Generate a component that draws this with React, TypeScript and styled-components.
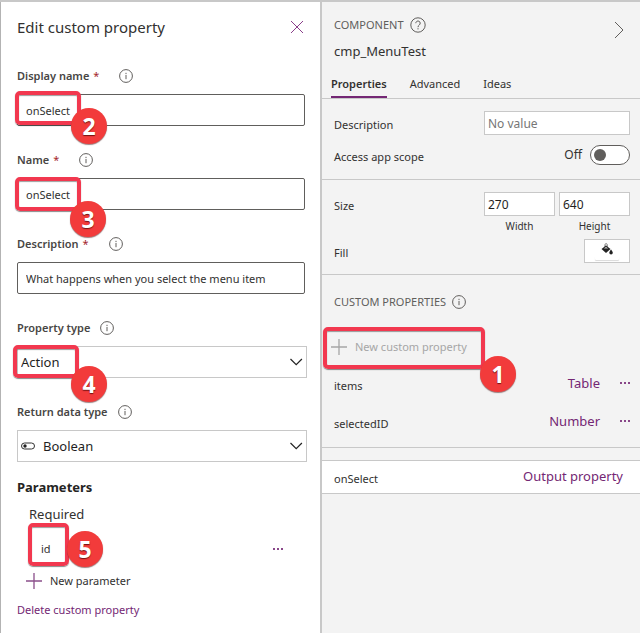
import React from "react";
import styled, { createGlobalStyle } from "styled-components";

const GlobalStyle = createGlobalStyle`
  * { box-sizing: border-box; }
  body { margin: 0; background: #f3f3f3; }
  body, button, input, select {
    font-family: "Noto Sans", "Open Sans", sans-serif;
    font-size: 11px;
    line-height: 16px;
    color: #323130;
  }
  svg { display: block; flex: none; }
`;

const PURPLE = "#742774";
const LINE = "#c8c8c8";

const Screen = styled.main`
  display: grid;
  grid-template-columns: 1fr 1fr;
  min-height: 100vh;
  border-top: 2px solid ${LINE};
`;

const EditPane = styled.section`
  display: flex;
  flex-direction: column;
  padding: 12px 13px 12px 16px;
  border-left: 1px solid #b3b3b3;
  background: #fff;
`;

const PaneHeader = styled.header`
  display: flex;
  align-items: center;
  justify-content: space-between;
  height: 26px;
  margin-bottom: 26px;
`;

const PaneTitle = styled.h1`
  margin: 0;
  font-size: 15px;
  line-height: 24px;
  font-weight: 400;
`;

const IconButton = styled.button`
  display: grid;
  place-items: center;
  flex: none;
  padding: 2px;
  border: 0;
  background: none;
  color: ${PURPLE};
  cursor: pointer;
`;

const CloseButton = styled(IconButton)`
  margin-right: 1px;
`;

const Fields = styled.div`
  display: grid;
  gap: 24px;
`;

const LabelRow = styled.div`
  display: flex;
  align-items: center;
  height: 20px;
  margin-bottom: 8px;
`;

const FieldLabel = styled.label<{ $required?: boolean }>`
  margin-right: ${(p) => (p.$required ? 20 : 10)}px;
  font-weight: 600;
  color: #484644;
`;

const Star = styled.span`
  margin-left: 4px;
  font-weight: 400;
  color: #a4262c;
`;

const Control = styled.div`
  position: relative;
`;

const TextControl = styled(Control)`
  margin-right: 2px;
`;

const TextBox = styled.input`
  display: block;
  width: 100%;
  height: 32px;
  padding: 0 8px;
  border: 1px solid #605e5c;
  border-radius: 2px;
  background: #fff;
`;

const SelectFrame = styled.div`
  display: flex;
  align-items: center;
  height: 32px;
  padding: 0 3px;
  border: 1px solid ${LINE};
`;

const SelectBox = styled.select<{ $icon?: boolean }>`
  flex: 1;
  min-width: 0;
  height: 24px;
  margin-left: ${(p) => (p.$icon ? 8 : 0)}px;
  padding: 0;
  border: 0;
  background: transparent;
  appearance: none;
  font-size: 13px;
  line-height: 20px;
  color: #1f1f1f;
`;

const Highlight = styled.span<{ $x: number; $y: number; $w: number; $h: number }>`
  position: absolute;
  left: ${(p) => p.$x}px;
  top: ${(p) => p.$y}px;
  width: ${(p) => p.$w}px;
  height: ${(p) => p.$h}px;
  border: 4px solid #f2384f;
  border-radius: 5px;
  box-shadow: 0 1px 1px rgba(60, 60, 60, 0.6), inset 0 1px 1px rgba(60, 60, 60, 0.5);
  pointer-events: none;
`;

const Badge = styled.span<{ $x: number; $y: number }>`
  position: absolute;
  left: ${(p) => p.$x}px;
  top: ${(p) => p.$y}px;
  z-index: 1;
  display: grid;
  place-items: center;
  width: 36px;
  height: 36px;
  border-radius: 50%;
  background: #f23b3b;
  box-shadow: 0 1px 1px rgba(90, 40, 40, 0.6);
  color: #fff;
  font-size: 23px;
  line-height: 36px;
  font-weight: 700;
  text-shadow: 0 1px 1px rgba(60, 0, 0, 0.7);
  pointer-events: none;
`;

const SectionTitle = styled.h2`
  margin: 15px 0 8px;
  font-size: 13px;
  line-height: 20px;
  font-weight: 700;
  color: #252423;
`;

const ParameterGroup = styled.div`
  padding: 0 12px;
`;

const GroupName = styled.h3`
  margin: 0;
  font-size: 13px;
  line-height: 18px;
  font-weight: 400;
`;

const ParameterRow = styled.div`
  position: relative;
  display: flex;
  align-items: center;
  justify-content: space-between;
  height: 48px;
  padding: 4px 10px 0 12px;
`;

const AddButton = styled.button<{ $muted?: boolean }>`
  display: flex;
  align-items: center;
  gap: 8px;
  padding: 0;
  border: 0;
  background: none;
  color: ${(p) => (p.$muted ? "#a6a6a6" : "#323130")};
  cursor: pointer;
`;

const NewParameter = styled(AddButton)`
  margin: 2px 9px 0;
`;

const DeleteLink = styled.a`
  align-self: flex-start;
  margin-top: 13px;
  color: ${PURPLE};
  text-decoration: none;
`;

const PropertyPane = styled.section`
  border-left: 2px solid ${LINE};
  background: #f3f3f3;
`;

const ComponentHeader = styled.header`
  display: flex;
  justify-content: space-between;
  padding: 14px 14px 0 12px;
`;

const Caption = styled.h2`
  display: flex;
  align-items: center;
  gap: 6px;
  height: 18px;
  margin: 0;
  font-size: 11px;
  font-weight: 400;
  color: #605e5c;
`;

const ComponentName = styled.div`
  margin-top: 7px;
  font-size: 13px;
  line-height: 20px;
`;

const Expand = styled(IconButton)`
  align-self: flex-start;
  margin-top: 3px;
  color: #605e5c;
`;

const Tabs = styled.nav`
  display: flex;
  gap: 23px;
  margin-top: 14px;
  padding-left: 9px;
  border-bottom: 1px solid ${LINE};
`;

const Tab = styled.button<{ $active?: boolean }>`
  height: 23px;
  padding: 0 0 3px;
  border: 0;
  border-bottom: 2px solid ${(p) => (p.$active ? PURPLE : "transparent")};
  background: none;
  font-weight: ${(p) => (p.$active ? 600 : 400)};
  cursor: pointer;
`;

const Group = styled.div`
  padding: 12px 10px 11px 12px;
  border-bottom: 1px solid ${LINE};
`;

const Row = styled.div`
  display: flex;
  align-items: center;
  justify-content: space-between;
`;

const Name = styled.label`
  padding-top: 3px;
`;

const SmallBox = styled.input`
  display: block;
  width: 100%;
  height: 24px;
  padding: 0 3px;
  border: 1px solid ${LINE};
  background: #fff;
  font-size: 12px;
  color: #1f1f1f;
  &::placeholder { color: #767676; opacity: 1; }
`;

const Inputs = styled.div`
  display: flex;
  gap: 4px;
  width: 146px;
`;

const Dimension = styled.label`
  flex: 1;
  font-size: 10px;
  line-height: 20px;
  text-align: center;
`;

const SwitchRow = styled(Row)`
  margin: 10px 0 3px;
`;

const SwitchLabel = styled.label`
  display: flex;
  align-items: center;
  gap: 8px;
  font-size: 12px;
`;

const Switch = styled.input`
  appearance: none;
  width: 40px;
  height: 20px;
  margin: 0;
  padding: 3px;
  border: 1px solid #605e5c;
  border-radius: 10px;
  background: #fff;
  &::before {
    content: "";
    display: block;
    width: 12px;
    height: 12px;
    border-radius: 50%;
    background: #605e5c;
  }
  &:checked::before { margin-left: auto; }
`;

const SizeRow = styled(Row)`
  align-items: flex-start;
`;

const SizeName = styled.span`
  padding-top: 2px;
  line-height: 24px;
`;

const FillRow = styled(Row)`
  margin-top: 3px;
`;

const FillButton = styled.button`
  display: flex;
  flex-direction: column;
  align-items: center;
  width: 46px;
  height: 24px;
  padding: 2px 0 0;
  border: 1px solid ${LINE};
  background: #fff;
`;

const Swatch = styled.span`
  width: 24px;
  height: 4px;
  border-radius: 1px;
  background: #fff;
  box-shadow: 0 1px 1px rgba(0, 0, 0, 0.15);
`;

const CustomGroup = styled.div`
  padding: 18px 8px 7px 12px;
  border-bottom: 1px solid ${LINE};
`;

const AddRow = styled.div`
  position: relative;
  height: 24px;
  margin: 26px 0 3px -3px;
  padding-top: 2px;
`;

const PropertyRow = styled(Row)`
  height: 38px;
`;

const PropertyName = styled.span`
  padding-top: 5px;
`;

const Actions = styled.div`
  display: flex;
  align-items: center;
  gap: 18px;
`;

const TypeLink = styled.a`
  color: ${PURPLE};
  font-size: 13px;
  line-height: 18px;
  text-decoration: none;
`;

const OutputRow = styled(Row)`
  height: 34px;
  margin-top: 12px;
  padding: 0 17px 2px 12px;
  border: solid ${LINE};
  border-width: 1px 0;
  background: #fff;
`;

const InfoIcon = () => (
  <svg width="14" height="14" viewBox="0 0 14 14" fill="none" stroke="#605e5c">
    <circle cx="7" cy="7" r="6.4" />
    <path d="M7 6v4.2M7 3.8v1.3" />
  </svg>
);

const HelpIcon = () => (
  <svg width="16" height="16" viewBox="0 0 16 16" fill="none" stroke="#605e5c">
    <circle cx="8" cy="8" r="7.2" />
    <path d="M5.8 6.2a2.2 2.2 0 1 1 3.6 1.7C8.5 8.6 8 9 8 10.2M8 11.2v1.2" />
  </svg>
);

const PlusIcon = () => (
  <svg width="16" height="16" viewBox="0 0 16 16" fill="none" stroke="currentColor" strokeWidth="1.3">
    <path d="M8 0v16M0 8h16" />
  </svg>
);

const PurplePlus = styled.span`
  color: #8b4f8b;
`;

const ChevronDown = () => (
  <svg width="14" height="8" viewBox="0 0 14 8" fill="none" stroke="#222" strokeWidth="1.2">
    <path d="M1.5 1l5.7 5.7L12.9 1" />
  </svg>
);

const MoreIcon = () => (
  <svg width="10" height="4" viewBox="0 0 10 4" fill="currentColor">
    <path d="M0 1h2v2H0zM4 1h2v2H4zM8 1h2v2H8z" opacity=".85" />
  </svg>
);

const BooleanIcon = () => (
  <svg width="14" height="8" viewBox="0 0 14 8" fill="none" stroke="#333">
    <rect x=".5" y="1" width="13" height="6" rx="3" />
    <circle cx="4" cy="4" r="1.7" fill="#222" stroke="none" />
  </svg>
);

const BucketIcon = () => (
  <svg width="14" height="14" viewBox="0 0 14 14">
    <path d="M5 6V3c0-2 2.200-2 2.200 0v3" fill="none" stroke="#777" />
    <path d="M1.500 7L6 3.500 10.500 7 6 11z" fill="#222" />
    <path d="M3.800 6.500L6 4.700l2.200 1.800z" fill="#bbb" />
    <path d="M11 7.500s1.800 2.200 1.800 3.200a1.700 1.700 0 0 1-3.500 0c0-1 1.700-3.200 1.700-3.200z" fill="#222" />
  </svg>
);

function Required({ id, label }: { id: string; label: string }) {
  return (
    <LabelRow>
      <FieldLabel htmlFor={id} $required>
        {label}
        <Star>*</Star>
      </FieldLabel>
      <InfoIcon />
    </LabelRow>
  );
}

function Property({ name, type }: { name: string; type: string }) {
  return (
    <PropertyRow>
      <PropertyName>{name}</PropertyName>
      <Actions>
        <TypeLink href="#">{type}</TypeLink>
        <IconButton aria-label={`More options for ${name}`}>
          <MoreIcon />
        </IconButton>
      </Actions>
    </PropertyRow>
  );
}

export default function App() {
  return (
    <>
      <GlobalStyle />
      <Screen>
        <EditPane>
          <PaneHeader>
            <PaneTitle>Edit custom property</PaneTitle>
            <CloseButton aria-label="Close">
              <svg width="14" height="14" viewBox="0 0 14 14" stroke="#8a3f8a">
                <path d="M1 1l12 12M13 1L1 13" />
              </svg>
            </CloseButton>
          </PaneHeader>

          <Fields>
            <div>
              <Required id="display-name" label="Display name" />
              <TextControl>
                <TextBox id="display-name" defaultValue="onSelect" />
                <Highlight $x={-2} $y={-3} $w={66} $h={34} />
                <Badge $x={54} $y={14}>2</Badge>
              </TextControl>
            </div>
            <div>
              <Required id="name" label="Name" />
              <TextControl>
                <TextBox id="name" defaultValue="onSelect" />
                <Highlight $x={-2} $y={-1} $w={66} $h={34} />
                <Badge $x={53} $y={23}>3</Badge>
              </TextControl>
            </div>
            <div>
              <Required id="description" label="Description" />
              <TextControl>
                <TextBox id="description" defaultValue="What happens when you select the menu item" />
              </TextControl>
            </div>
            <div>
              <LabelRow>
                <FieldLabel htmlFor="property-type">Property type</FieldLabel>
                <InfoIcon />
              </LabelRow>
              <Control>
                <SelectFrame>
                  <SelectBox id="property-type">
                    <option>Action</option>
                  </SelectBox>
                  <ChevronDown />
                </SelectFrame>
                <Highlight $x={-4} $y={-1} $w={66} $h={33} />
                <Badge $x={54} $y={20}>4</Badge>
              </Control>
            </div>
            <div>
              <LabelRow>
                <FieldLabel htmlFor="return-type">Return data type</FieldLabel>
                <InfoIcon />
              </LabelRow>
              <SelectFrame>
                <BooleanIcon />
                <SelectBox id="return-type" $icon>
                  <option>Boolean</option>
                </SelectBox>
                <ChevronDown />
              </SelectFrame>
            </div>
          </Fields>

          <SectionTitle>Parameters</SectionTitle>
          <ParameterGroup>
            <GroupName>Required</GroupName>
            <ParameterRow>
              <span>id</span>
              <IconButton aria-label="More options for id">
                <MoreIcon />
              </IconButton>
              <Highlight $x={-1} $y={0} $w={41} $h={43} />
              <Badge $x={38} $y={8}>5</Badge>
            </ParameterRow>
          </ParameterGroup>
          <NewParameter>
            <PurplePlus>
              <PlusIcon />
            </PurplePlus>
            New parameter
          </NewParameter>
          <DeleteLink href="#">Delete custom property</DeleteLink>
        </EditPane>

        <PropertyPane>
          <ComponentHeader>
            <div>
              <Caption>
                COMPONENT
                <HelpIcon />
              </Caption>
              <ComponentName>cmp_MenuTest</ComponentName>
            </div>
            <Expand aria-label="Collapse pane">
              <svg width="10" height="18" viewBox="0 0 10 18" fill="none" stroke="currentColor">
                <path d="M1 1l8 8-8 8" />
              </svg>
            </Expand>
          </ComponentHeader>
          <Tabs>
            <Tab $active>Properties</Tab>
            <Tab>Advanced</Tab>
            <Tab>Ideas</Tab>
          </Tabs>

          <Group>
            <Row>
              <Name htmlFor="component-description">Description</Name>
              <Inputs>
                <SmallBox id="component-description" placeholder="No value" />
              </Inputs>
            </Row>
            <SwitchRow>
              <Name htmlFor="scope">Access app scope</Name>
              <SwitchLabel>
                Off
                <Switch id="scope" type="checkbox" role="switch" />
              </SwitchLabel>
            </SwitchRow>
          </Group>

          <Group>
            <SizeRow>
              <SizeName>Size</SizeName>
              <Inputs>
                <Dimension>
                  <SmallBox defaultValue="270" />
                  Width
                </Dimension>
                <Dimension>
                  <SmallBox defaultValue="640" />
                  Height
                </Dimension>
              </Inputs>
            </SizeRow>
            <FillRow>
              <Name htmlFor="fill">Fill</Name>
              <FillButton id="fill" aria-label="Fill">
                <BucketIcon />
                <Swatch />
              </FillButton>
            </FillRow>
          </Group>

          <CustomGroup>
            <Caption>
              CUSTOM PROPERTIES
              <InfoIcon />
            </Caption>
            <AddRow>
              <AddButton $muted>
                <PlusIcon />
                New custom property
              </AddButton>
              <Highlight $x={-8} $y={-10} $w={162} $h={42} />
              <Badge $x={149} $y={19}>1</Badge>
            </AddRow>
            <Property name="items" type="Table" />
            <Property name="selectedID" type="Number" />
          </CustomGroup>

          <OutputRow>
            <PropertyName>onSelect</PropertyName>
            <TypeLink href="#">Output property</TypeLink>
          </OutputRow>
        </PropertyPane>
      </Screen>
    </>
  );
}
